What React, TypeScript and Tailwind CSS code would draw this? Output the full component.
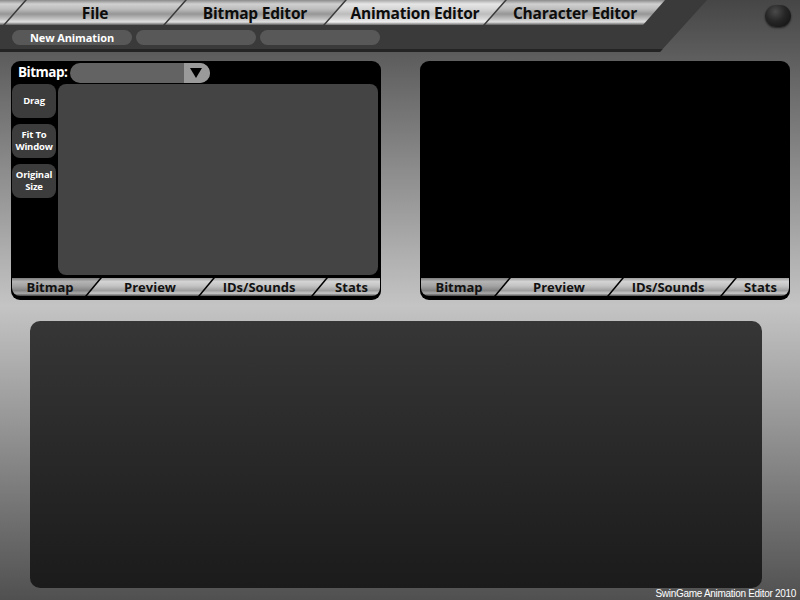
import React from "react";

const metal =
  "bg-[linear-gradient(180deg,#8a8a8a_0%,#d0d0d0_16%,#bdbdbd_36%,#969696_56%,#c2c2c2_76%,#e0e0e0_88%,#5a5a5a_100%)]";
const metalActive =
  "bg-[linear-gradient(180deg,#a8a8a8_0%,#e6e6e6_16%,#d6d6d6_36%,#bcbcbc_56%,#dadada_76%,#f0f0f0_88%,#6a6a6a_100%)]";
const smallMetal =
  "bg-[linear-gradient(180deg,#9c9c9c_0%,#d4d4d4_20%,#c2c2c2_45%,#9e9e9e_70%,#c8c8c8_85%,#505050_100%)]";
const smallMetalDark =
  "bg-[linear-gradient(180deg,#7c7c7c_0%,#b4b4b4_20%,#a2a2a2_45%,#828282_70%,#aaaaaa_85%,#444444_100%)]";

function TopTabs() {
  const tabs = ["File", "Bitmap Editor", "Animation Editor", "Character Editor"];
  return (
    <div className="flex h-[25px]">
      <div className={`w-[25px] h-full shrink-0 ${metal} [clip-path:polygon(0_0,25px_0,3px_100%,0_100%)]`} />
      {tabs.map((t, i) => (
        <div
          key={t}
          className={`-ml-[20px] w-[180px] h-full shrink-0 flex items-center justify-center pt-[3px] ${
            i === 2 ? metalActive : metal
          } [clip-path:polygon(22px_0,180px_0,158px_100%,0_100%)]`}
        >
          <span className="text-[15.5px] tracking-[-0.2px] font-bold text-[#0c0c0c] leading-none">{t}</span>
        </div>
      ))}
    </div>
  );
}

function PanelTabs() {
  return (
    <div className="flex h-[18px] rounded-b-[8px] overflow-hidden">
      <div
        className={`w-[88px] h-full shrink-0 flex items-center justify-center pr-[12px] pt-[1px] ${smallMetalDark} [clip-path:polygon(0_0,88px_0,73px_100%,0_100%)]`}
      >
        <span className="text-[13px] font-bold text-[#111] leading-none">Bitmap</span>
      </div>
      <div
        className={`-ml-[13px] w-[126px] h-full shrink-0 flex items-center justify-center pt-[1px] ${smallMetal} [clip-path:polygon(15px_0,126px_0,111px_100%,0_100%)]`}
      >
        <span className="text-[13px] font-bold text-[#111] leading-none">Preview</span>
      </div>
      <div
        className={`-ml-[13px] w-[126px] h-full shrink-0 flex items-center justify-center pr-[8px] pt-[1px] ${smallMetal} [clip-path:polygon(15px_0,126px_0,111px_100%,0_100%)]`}
      >
        <span className="text-[13px] font-bold text-[#111] leading-none">IDs/Sounds</span>
      </div>
      <div
        className={`-ml-[13px] flex-1 h-full flex items-center justify-center pl-[10px] pt-[1px] ${smallMetal} [clip-path:polygon(15px_0,100%_0,100%_100%,0_100%)]`}
      >
        <span className="text-[13px] font-bold text-[#111] leading-none">Stats</span>
      </div>
    </div>
  );
}

function SideButton({ lines }: { lines: string[] }) {
  return (
    <div className="h-[34px] rounded-[8px] bg-[#3c3c3c] flex flex-col items-center justify-center">
      {lines.map((l) => (
        <span key={l} className="text-white font-bold text-[9.5px] tracking-[-0.2px] leading-[12px]">
          {l}
        </span>
      ))}
    </div>
  );
}

export default function App() {
  return (
    <div className="w-[800px] h-[600px] overflow-hidden flex flex-col font-['Open_Sans',sans-serif] bg-[linear-gradient(180deg,#464646_0%,#c4c4c4_51%,#505050_100%)]">
      {/* Header */}
      <div className="flex h-[52px] shrink-0">
        <div className="w-[707px] h-[52px] shrink-0 bg-[#3a3a3a] border-b-[3px] border-[#242424] [clip-path:polygon(0_0,707px_0,660px_52px,0_52px)] flex flex-col">
          <TopTabs />
          <div className="flex gap-[4px] pl-[12px] mt-[5px]">
            <div className="w-[120px] h-[15px] rounded-full bg-[#585858] flex items-center justify-center">
              <span className="text-white font-bold text-[11px] tracking-[-0.1px] leading-none">New Animation</span>
            </div>
            <div className="w-[120px] h-[15px] rounded-full bg-[#585858]" />
            <div className="w-[120px] h-[15px] rounded-full bg-[#585858]" />
          </div>
        </div>
        <div className="flex-1" />
        <div className="mt-[5px] mr-[9px] w-[26px] h-[22px] rounded-full bg-[radial-gradient(circle_at_40%_30%,#4a4a4a_0%,#262626_45%,#0e0e0e_100%)] shadow-[0_1px_2px_rgba(0,0,0,0.6)]" />
      </div>

      {/* Panels row */}
      <div className="flex mt-[9px] pl-[11px] gap-[39px] shrink-0">
        <div className="w-[370px] h-[239px] bg-black rounded-[9px] flex flex-col px-[1px] pt-[2px] pb-[4px]">
          <div className="h-[20px] flex items-center">
            <span className="w-[52px] shrink-0 ml-[6px] text-white font-bold text-[13.5px] tracking-[-0.5px] leading-none">
              Bitmap:
            </span>
            <div className="w-[140px] shrink-0 h-[20px] rounded-full bg-[#636363] flex justify-end overflow-hidden">
              <div className="w-[26px] h-full bg-[#9a9a9a] flex items-center justify-center pr-[2px]">
                <svg width="12" height="10" viewBox="0 0 12 10">
                  <polygon points="0,0 12,0 6,10" fill="#000" />
                </svg>
              </div>
            </div>
          </div>
          <div className="h-[191px] mt-[1px] flex gap-[2px]">
            <div className="w-[44px] flex flex-col gap-[6px]">
              <SideButton lines={["Drag"]} />
              <SideButton lines={["Fit To", "Window"]} />
              <SideButton lines={["Original", "Size"]} />
            </div>
            <div className="flex-1 mr-[2px] rounded-[8px] bg-[#444444]" />
          </div>
          <div className="mt-[3px]">
            <PanelTabs />
          </div>
        </div>

        <div className="w-[370px] h-[239px] bg-black rounded-[9px] flex flex-col px-[1px] pb-[4px]">
          <div className="flex-1" />
          <PanelTabs />
        </div>
      </div>

      {/* Bottom panel */}
      <div className="mt-[21px] ml-[30px] w-[732px] h-[267px] shrink-0 rounded-[10px] bg-[linear-gradient(180deg,#363636_0%,#1b1b1b_100%)]" />

      {/* Footer */}
      <div className="flex justify-end pr-[4px] h-[12px]">
        <span className="text-white text-[10px] tracking-[-0.3px] leading-[12px] font-['Liberation_Sans',sans-serif]">
          SwinGame Animation Editor 2010
        </span>
      </div>
    </div>
  );
}
